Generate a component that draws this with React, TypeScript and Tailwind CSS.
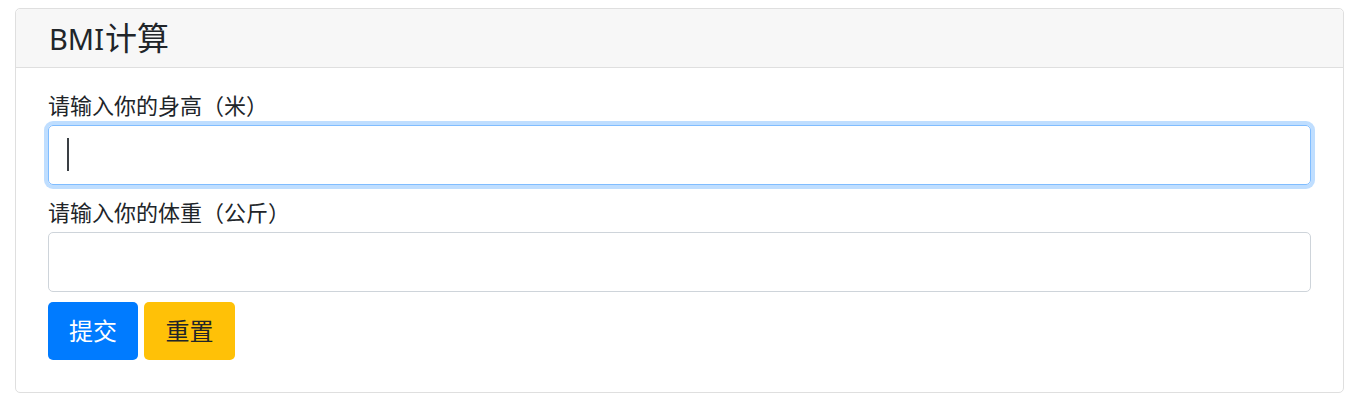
import { useState } from "react";

const font = "font-['Noto_Sans','Noto_Sans_CJK_SC',sans-serif]";

export default function App() {
  const [height, setHeight] = useState("");
  const [weight, setWeight] = useState("");

  return (
    <div className={`min-h-screen bg-white px-[15px] pt-[8px] text-[#212529] ${font}`}>
      <div className="w-[1329px] rounded-[5px] border border-[#dfdfdf] bg-white">
        <div className="flex h-[59px] items-center rounded-t-[5px] border-b border-[#dfdfdf] bg-[#f7f7f7] px-[33px]">
          <h3 className="text-[29px] leading-[36px] font-normal">
            BMI<span className="ml-[1px] text-[32px]">计算</span>
          </h3>
        </div>
        <form
          className="px-[32px] pt-[22px] pb-[32px]"
          onSubmit={(e) => e.preventDefault()}
        >
          <label className="mb-[4px] block text-[22px] leading-[31px]">
            请输入你的身高（米）
          </label>
          <div className="relative">
            <input
              value={height}
              onChange={(e) => setHeight(e.target.value)}
              className="block h-[60px] w-full rounded-[5px] border border-[#80bdff] px-[16px] text-[22px] text-[#495057] shadow-[0_0_0_4px_rgba(0,123,255,0.25)] outline-none"
            />
            {height === "" && (
              <span className="absolute top-[13px] left-[19px] h-[33px] w-[2px] bg-[#3a3f44]" />
            )}
          </div>

          <label className="mt-[12px] mb-[4px] block text-[22px] leading-[31px]">
            请输入你的体重（公斤）
          </label>
          <input
            value={weight}
            onChange={(e) => setWeight(e.target.value)}
            className="block h-[60px] w-full rounded-[5px] border border-[#ced4da] px-[16px] text-[22px] text-[#495057] outline-none"
          />

          <div className="mt-[10px] flex gap-[6px]">
            <button
              type="submit"
              className="h-[58px] w-[90px] rounded-[5px] bg-[#007bff] text-[24px] text-white"
            >
              提交
            </button>
            <button
              type="button"
              onClick={() => {
                setHeight("");
                setWeight("");
              }}
              className="h-[58px] w-[91px] rounded-[5px] bg-[#ffc107] text-[24px] text-[#212529]"
            >
              重置
            </button>
          </div>
        </form>
      </div>
    </div>
  );
}
